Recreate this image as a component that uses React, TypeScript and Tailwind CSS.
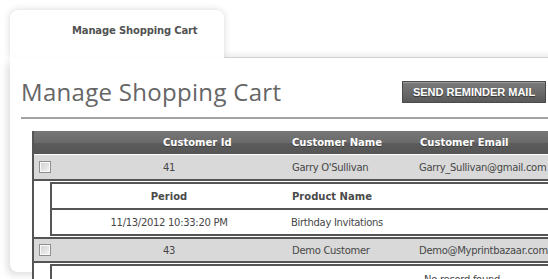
const cell = "font-['DejaVu_Sans',sans-serif] text-[10px] tracking-[-0.3px] text-[#474747]"
const headCell = "font-['DejaVu_Sans',sans-serif] text-[10px] font-bold text-white [text-shadow:0_1px_0_rgba(0,0,0,0.35)]"
const subHead = "font-['DejaVu_Sans',sans-serif] text-[10px] font-bold text-[#4a4a4a]"

function Checkbox() {
    return (
        <span className="block w-[12px] h-[12px] border border-[#8e8e8e] bg-[linear-gradient(135deg,#cfcfcf,#f5f5f5)] shadow-[inset_0_0_0_1px_#fafafa]" />
    )
}

interface Order {
    id: number
    name: string
    email: string
    items: { period: string; product: string }[]
}

const orders: Order[] = [
    {
        id: 41,
        name: "Garry O'Sullivan",
        email: 'Garry_Sullivan@gmail.com',
        items: [{ period: '11/13/2012 10:33:20 PM', product: 'Birthday Invitations' }],
    },
    { id: 43, name: 'Demo Customer', email: 'Demo@Myprintbazaar.com', items: [] },
]

export default function App() {
    return (
        <div className="w-[548px] h-[279px] overflow-hidden bg-white">
            <div className="w-[640px] pt-[10px] pl-[10px]">
                {/* Tab strip */}
                <div className="flex h-[48px]">
                    <div className="w-[214px] shrink-0 rounded-t-lg bg-white shadow-[0_0_7px_rgba(0,0,0,0.16)] pt-[15px] pl-[62px] font-['DejaVu_Sans',sans-serif] text-[10px] leading-[12px] font-bold tracking-[-0.15px] text-[#525252]">
                        Manage Shopping Cart
                    </div>
                    <div className="flex-1 self-end h-[8px] bg-gradient-to-b from-transparent to-black/[0.06] border-b border-[#d2d2d2]" />
                </div>

                {/* Panel */}
                <div className="relative h-[214px] bg-white rounded-bl-lg shadow-[-4px_4px_7px_-1px_rgba(0,0,0,0.13)] pl-[11px] pt-[23px]">
                    <div className="w-[525px] h-[22px] flex items-center justify-between">
                        <h1 className="font-['Open_Sans',sans-serif] text-[24px] leading-[22px] tracking-[0.3px] text-[#666]">
                            Manage Shopping Cart
                        </h1>
                        <button className="w-[144px] h-[22px] border border-[#4a4a4a] bg-[linear-gradient(#7b7b7b,#5a5a5a)] shadow-[inset_0_1px_0_rgba(255,255,255,0.25)] font-['Liberation_Sans',Arial,sans-serif] text-[11px] font-bold text-white [text-shadow:0_1px_1px_rgba(0,0,0,0.5)]">
                            SEND REMINDER MAIL
                        </button>
                    </div>

                    <div className="mt-[14px] h-[2px] bg-[#a3a3a3]" />

                    {/* Table */}
                    <div className="ml-[11px] mt-[12px] border-l-2 border-[#555]">
                        <div className="flex h-[24px] items-center border-b border-white bg-[linear-gradient(#777,#6a6a6a_50%,#5c5c5c_52%,#555)]">
                            <div className="w-[26px]" />
                            <div className={`w-[218px] pl-[103px] ${headCell}`}>Customer Id</div>
                            <div className={`w-[135px] pl-[14px] ${headCell}`}>Customer Name</div>
                            <div className={`pl-[7px] ${headCell}`}>Customer Email</div>
                        </div>

                        {orders.map((order, i) => (
                            <div key={order.id}>
                                <div
                                    className={`flex items-center bg-[#d9d9d9] border-b-2 border-[#555] ${i > 0 ? 'h-[26px] border-t-2' : 'h-[26px]'}`}
                                >
                                    <div className="w-[26px] pl-[5px]">
                                        <Checkbox />
                                    </div>
                                    <div className={`w-[218px] text-center ${cell}`}>{order.id}</div>
                                    <div className={`w-[135px] pl-[14px] ${cell}`}>{order.name}</div>
                                    <div className={`pl-[6px] ${cell}`}>{order.email}</div>
                                </div>

                                <div className="py-px pl-[16px] bg-white">
                                    <div className="border-l-2 border-y-2 border-[#555]">
                                        {order.items.length > 0 ? (
                                            <>
                                                <div className="flex h-[26px] items-center border-b-2 border-[#555]">
                                                    <div className={`w-[234px] text-center ${subHead}`}>Period</div>
                                                    <div className={`pl-[6px] ${subHead}`}>Product Name</div>
                                                </div>
                                                {order.items.map((item) => (
                                                    <div key={item.period} className="flex h-[24px] items-center">
                                                        <div className={`w-[234px] text-center ${cell}`}>{item.period}</div>
                                                        <div className={`pl-[5px] ${cell}`}>{item.product}</div>
                                                    </div>
                                                ))}
                                            </>
                                        ) : (
                                            <div className={`h-[30px] pt-[8px] pl-[372px] leading-[12px] ${cell}`}>No record found</div>
                                        )}
                                    </div>
                                </div>
                            </div>
                        ))}
                    </div>
                </div>
            </div>
        </div>
    )
}
